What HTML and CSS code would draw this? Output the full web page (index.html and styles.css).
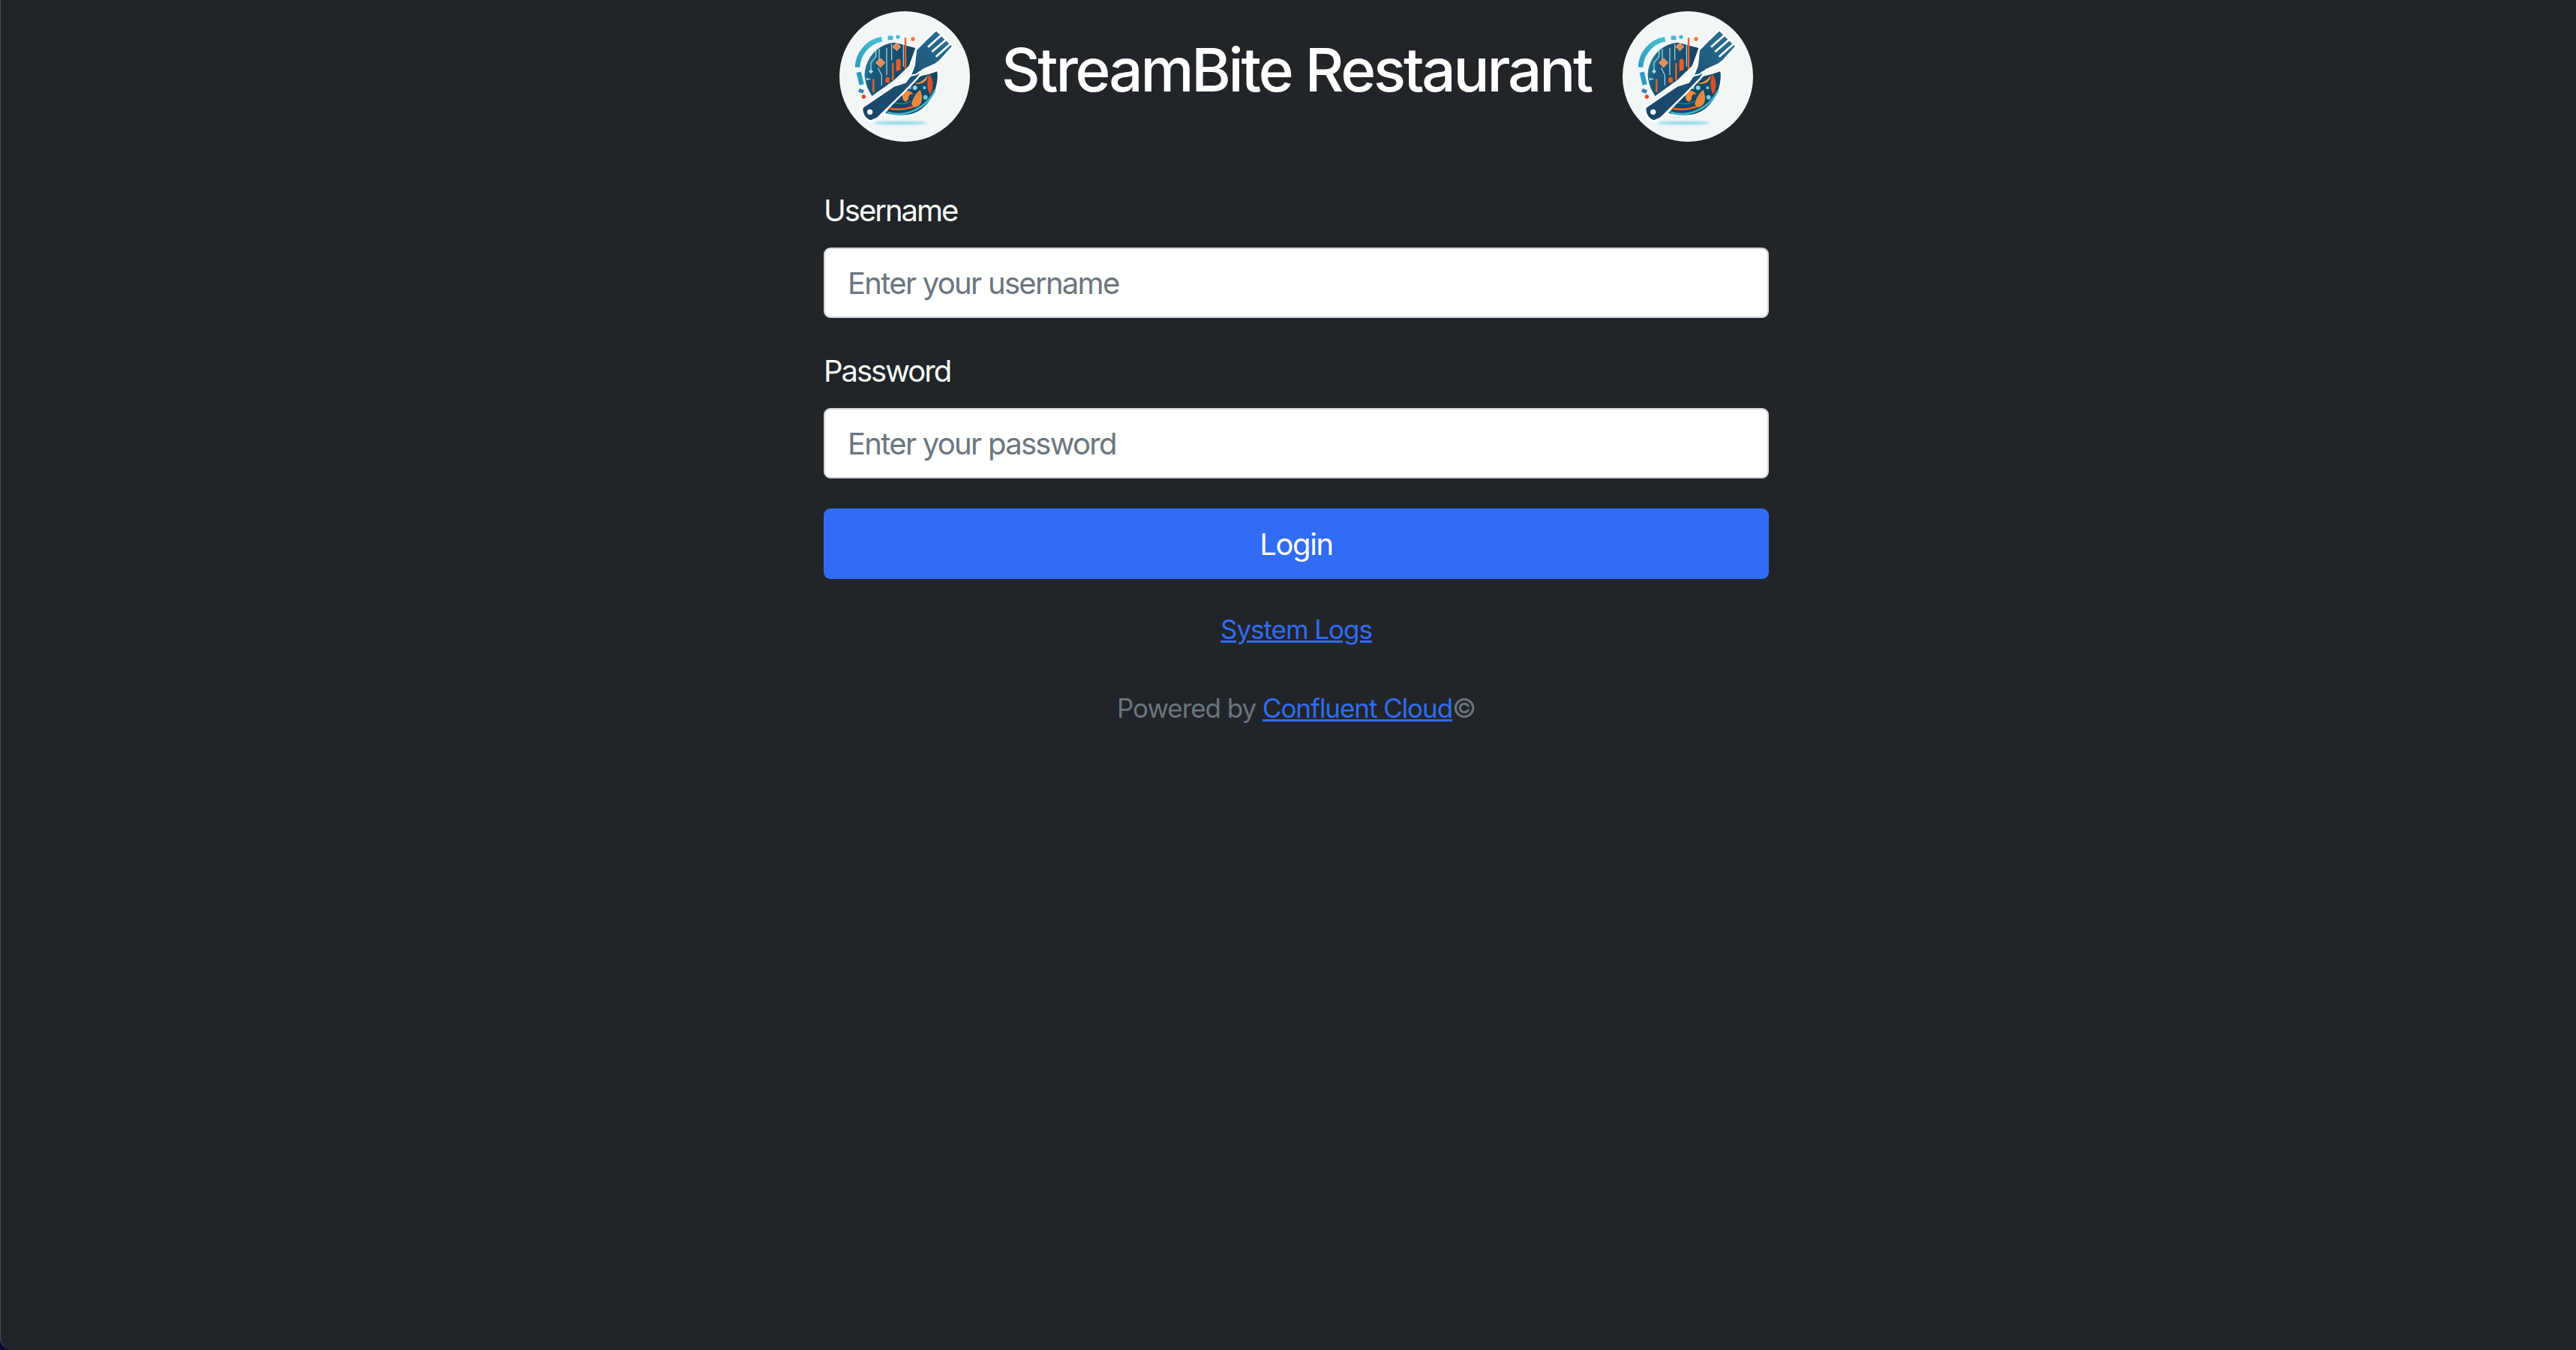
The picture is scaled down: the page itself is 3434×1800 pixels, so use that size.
FILE: index.html
```html
<!DOCTYPE html>
<html lang="en">
<head>
<meta charset="utf-8">
<title>StreamBite Restaurant</title>
<link rel="stylesheet" href="styles.css">
</head>
<body>
<svg class="defs" width="0" height="0" aria-hidden="true">
  <defs>
    <linearGradient id="plate" x1="0" y1="0" x2="1" y2="0.4">
      <stop offset="0" stop-color="#2e9db5"/>
      <stop offset="0.35" stop-color="#1c5878"/>
      <stop offset="1" stop-color="#173f5e"/>
    </linearGradient>
    <linearGradient id="forkfill" x1="0" y1="1" x2="1" y2="0">
      <stop offset="0" stop-color="#1b4264"/>
      <stop offset="0.55" stop-color="#1f5478"/>
      <stop offset="1" stop-color="#2a7697"/>
    </linearGradient>
    <linearGradient id="arcfill" x1="0" y1="1" x2="1" y2="0">
      <stop offset="0" stop-color="#2f9cc0"/>
      <stop offset="1" stop-color="#45c3cf"/>
    </linearGradient>
    <filter id="soft" x="-5%" y="-5%" width="110%" height="110%"><feGaussianBlur stdDeviation="1.6"/></filter>
    <filter id="glow" x="-20%" y="-200%" width="140%" height="500%"><feGaussianBlur stdDeviation="5"/></filter>
    <symbol id="logo" viewBox="86 44 522 522">
      <circle cx="347" cy="305" r="261" fill="#f2f6f7"/>
      <ellipse cx="330" cy="491" rx="105" ry="6" fill="#7fd3e2" filter="url(#glow)"/>
      <g filter="url(#soft)">
        <path d="M158 268A118 118 0 0 1 256 156" fill="none" stroke="url(#arcfill)" stroke-width="20"/>
        <path d="M163 288L175 338" fill="none" stroke="#2f9cc0" stroke-width="19"/>
        <rect x="163" y="356" width="20" height="14" fill="#3a7fb0" transform="rotate(20 173 363)"/>
        <rect x="280" y="142" width="20" height="17" fill="#47b7cf"/>
        <circle cx="320" cy="147" r="8" fill="#47b7cf"/>
        <circle cx="380" cy="155" r="8" fill="#ec7a33"/>
        <circle cx="183" cy="386" r="8" fill="#d9492b"/>
        <path d="M185 295C190 225 245 170 310 168L392 190 366 262 306 320 216 385C198 358 186 330 185 295Z" fill="url(#plate)" stroke="#fff" stroke-width="3"/>
        <path d="M212 285V250L232 225V195M245 195V240M275 190V300M295 175V240M240 270L255 300V340M195 315H210M342 175V265" fill="none" stroke="#a9dfe9" stroke-width="3.5"/>
        <path d="M222 315V368M300 252V320M350 150V275" fill="none" stroke="#e8622a" stroke-width="7"/>
        <path d="M270 330V312Q278 302 287 312V330ZM313 285V240Q322 228 331 240V278Z" fill="#e4602c"/>
        <path d="M315 170L331 186 315 202 299 186ZM250 232L268 250 250 268 232 250Z" fill="#ef8a4c" stroke="#f7d5b8" stroke-width="2"/>
        <path d="M212 276L221 285 212 294 203 285Z" fill="#a6dff0"/>
        <circle cx="197" cy="316" r="4" fill="#a6dff0"/>
        <path d="M480 280C492 350 445 460 340 463 312 464 286 460 264 453L292 420 345 345 410 300 444 292Z" fill="#174664" stroke="#fff" stroke-width="7"/>
        <path d="M278 448C340 470 430 440 468 360" fill="none" stroke="#3cb7cc" stroke-width="8"/>
        <path d="M280 430C310 442 350 436 386 424" fill="none" stroke="#e8622a" stroke-width="8"/>
        <path d="M305 410Q345 420 372 404" fill="none" stroke="#2e9db5" stroke-width="3"/>
        <path d="M385 332C405 332 425 322 438 300 440 322 418 342 385 332Z" fill="#ee9240"/>
        <path d="M444 296C462 312 465 350 448 378 434 350 436 322 444 296Z" fill="#d9512b"/>
        <path d="M338 380C340 358 370 355 382 378 372 372 362 378 362 392 362 402 350 410 344 402 338 396 338 388 338 380Z" fill="#ef8d3d"/>
        <path d="M376 414C382 390 396 370 408 360 420 390 416 420 392 426 384 426 378 420 376 414Z" fill="#e98637" stroke="#f4b86b" stroke-width="2"/>
        <circle cx="368" cy="350" r="6" fill="#5cc3da"/>
        <circle cx="388" cy="350" r="9" fill="#8fd8e8"/>
        <circle cx="426" cy="350" r="7" fill="#5cc3da"/>
        <circle cx="430" cy="388" r="9" fill="#6fc8de"/>
        <path d="M178 428L305 342 350 328 370 300 385 262 392 198 430 160 473 119 540 184 490 240 470 256 420 278 398 312 340 372 238 472 212 483C190 480 172 450 178 428Z" fill="url(#forkfill)" stroke="#fff" stroke-width="7" stroke-linejoin="round"/>
        <path d="M440 187L500 134M456 206L519 152M472 226L534 171" fill="none" stroke="#fff" stroke-width="8"/>
        <path d="M312 322C340 322 362 300 388 298 398 298 400 288 414 284 440 276 458 272 478 262" fill="none" stroke="#fff" stroke-width="6"/>
        <circle cx="208" cy="447" r="11" fill="#fff"/>
      </g>
    </symbol>
  </defs>
</svg>
<main class="login">
  <header class="brand">
    <svg class="logo" role="img" aria-label="StreamBite logo"><use href="#logo"/></svg>
    <h1 class="title">StreamBite Restaurant</h1>
    <svg class="logo" role="img" aria-label="StreamBite logo"><use href="#logo"/></svg>
  </header>
  <form class="form">
    <div class="field">
      <label class="label" for="username">Username</label>
      <input class="input" id="username" type="text" placeholder="Enter your username">
    </div>
    <div class="field">
      <label class="label" for="password">Password</label>
      <input class="input" id="password" type="password" placeholder="Enter your password">
    </div>
    <button class="submit" type="button">Login</button>
  </form>
  <p class="logs"><a class="link" href="#">System Logs</a></p>
  <p class="powered">Powered by <a class="link" href="#">Confluent Cloud</a>©</p>
</main>
</body>
</html>
```
FILE: styles.css
```css
html, body { margin: 0; height: 100%; }
body {
  box-sizing: border-box;
  padding-left: 22px;
  background: #212529;
  font-family: Inter, "Liberation Sans", sans-serif;
  color: #fff;
  overflow: hidden;
}
body::after {
  content: "";
  position: fixed;
  inset: 0;
  border-left: 1px solid #4a4d51;
  border-bottom-left-radius: 16px;
  box-shadow: 0 0 0 30px #0b0a3c;
  pointer-events: none;
}
.defs { position: absolute; }
.login {
  width: 1260px;
  margin: 0 auto;
  display: flex;
  flex-direction: column;
}
.brand {
  display: flex;
  justify-content: center;
  align-items: center;
  gap: 42px;
  padding-top: 15px;
  height: 174px;
}
.logo { width: 174px; height: 174px; flex: none; }
.title {
  margin: 0 0 18px;
  font-size: 80px;
  font-weight: 500;
  line-height: 1.2;
  letter-spacing: -3.2px;
  color: #fff;
  white-space: nowrap;
}
.form { display: flex; flex-direction: column; margin-top: 62px; }
.field { display: flex; flex-direction: column; margin-bottom: 41px; }
.field:last-of-type { margin-bottom: 40px; }
.label { font-size: 40px; line-height: 60px; margin-bottom: 19px; letter-spacing: -2px; }
.input {
  box-sizing: border-box;
  height: 94px;
  padding: 0 30px;
  font: 40px Inter, "Liberation Sans", sans-serif;
  letter-spacing: -1.7px;
  background: #fff;
  border: 2px solid #ced4da;
  border-radius: 9px;
}
.input::placeholder { color: #6c757d; opacity: 1; }
.submit {
  height: 94px;
  border: 0;
  border-radius: 9px;
  background: #316cf4;
  color: #fff;
  font: 40px Inter, "Liberation Sans", sans-serif;
  letter-spacing: -1.4px;
}
.logs, .powered { margin: 0; text-align: center; font-size: 35px; line-height: 52px; letter-spacing: -1.05px; }
.logs { margin-top: 41px; }
.powered { margin-top: 53px; color: #6c757d; }
.link { color: #316cf4; text-decoration: underline; }
```
